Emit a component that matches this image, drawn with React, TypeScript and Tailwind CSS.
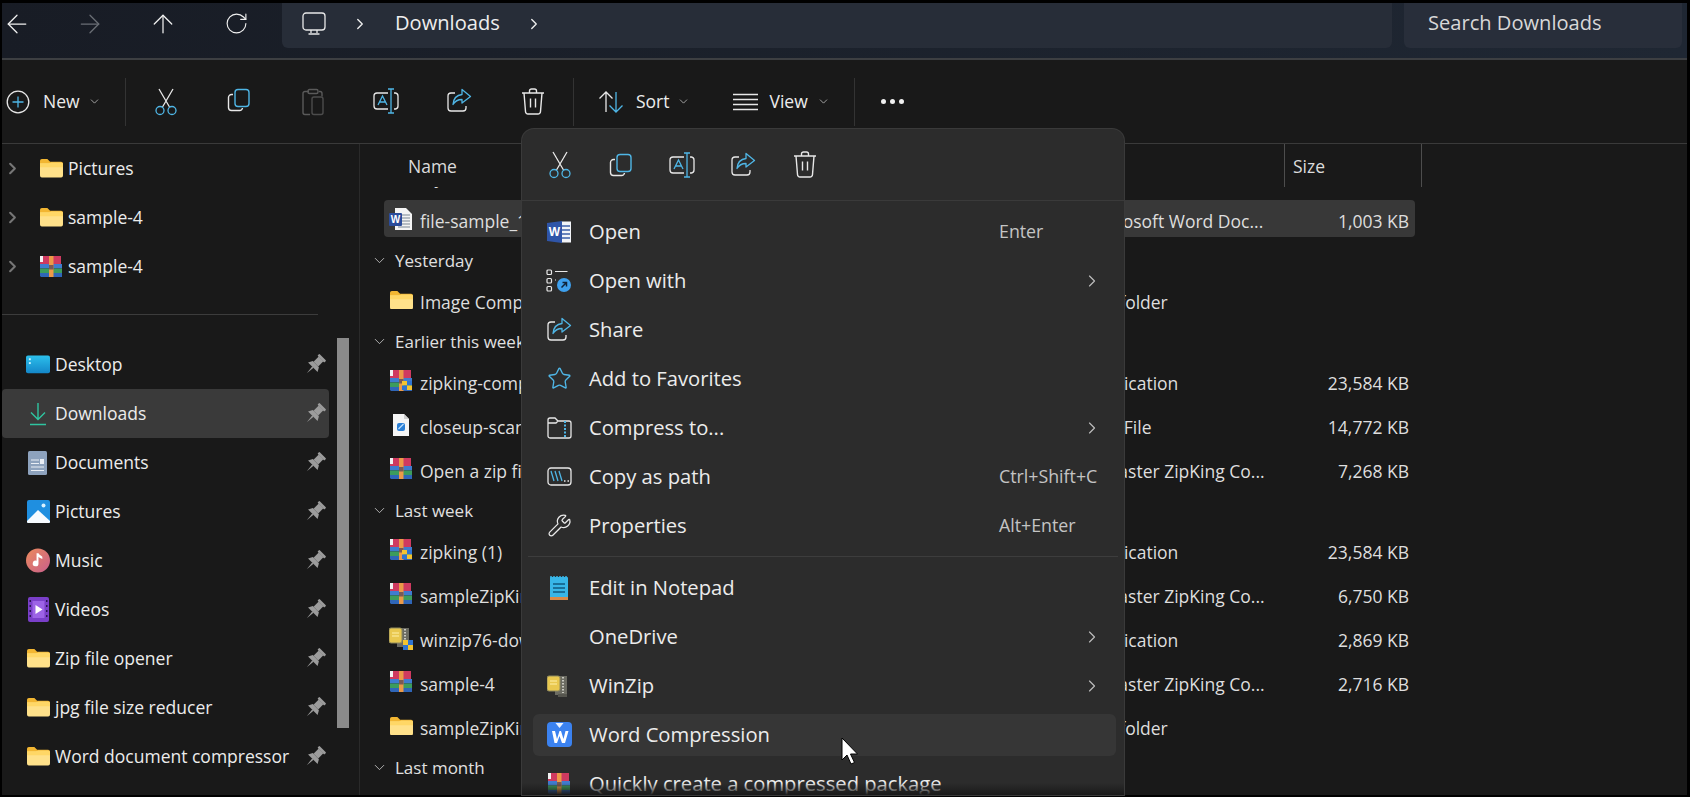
import { ArrowLeft, ArrowRight, ArrowUp, RotateCw, ChevronRight, ChevronDown, Star, Wrench } from 'lucide-react';
import type { ReactNode } from 'react';

const WHITE = '#e8e8e8';
const BLUE = '#4fb6e6';

function Folder({ size = 23 }: { size?: number }) {
  return (
    <svg width={size} height={size * 0.8} viewBox="0 0 25 20">
      <path d="M0 2a2 2 0 0 1 2-2h6l3 3h12a2 2 0 0 1 2 2v4H0z" fill="#f2b632" />
      <path d="M0 5h10l2-1h11a2 2 0 0 1 2 2v12a2 2 0 0 1-2 2H2a2 2 0 0 1-2-2z" fill="#ffe18a" />
      <path d="M0 5h10l2-1h11a2 2 0 0 1 2 2v3H0z" fill="#ffd766" />
    </svg>
  );
}

function Rar({ shield = false }: { shield?: boolean }) {
  return (
    <svg width="24" height="24" viewBox="0 0 24 24">
      <path d="M2 1h20v8H1V2z" fill="#cf3a60" />
      <rect x="1" y="9" width="22" height="4.500" fill="#3f7ccf" />
      <rect x="1" y="13.500" width="22" height="4.500" fill="#3c9c5c" />
      <path d="M1 18h22v4H2l-1-1z" fill="#2f66b8" />
      <rect x="1" y="1" width="3" height="6" fill="#f2f2f2" />
      <rect x="10" y="1" width="4.500" height="21" fill="#ec9a48" />
      <rect x="10" y="10" width="4.500" height="4.500" fill="#7a5a55" />
      {shield && (
        <g>
          <rect x="13" y="12" width="5" height="4.500" fill="#f4c430" />
          <rect x="18" y="12" width="5" height="4.500" fill="#2f74d0" />
          <rect x="13" y="16.500" width="5" height="4.500" fill="#2f74d0" />
          <rect x="18" y="16.500" width="5" height="4.500" fill="#f4c430" />
        </g>
      )}
    </svg>
  );
}

function WinZipIcon({ shield = false }: { shield?: boolean }) {
  return (
    <svg width="24" height="24" viewBox="0 0 24 24">
      <rect x="8" y="2" width="12" height="19" fill="#6b6b62" />
      <path d="M16 3v16" stroke="#c9c9c0" strokeWidth="2" strokeDasharray="1.500 1.500" />
      <rect x="0" y="2" width="13" height="15" rx="2" fill="#e9c84f" stroke="#8f8a5e" />
      <path d="M3 7h7M3 10h7" stroke="#fff0a8" />
      {shield ? (
        <g>
          <rect x="14" y="14" width="5" height="5" fill="#f4c430" />
          <rect x="19" y="14" width="5" height="5" fill="#2f74d0" />
          <rect x="14" y="19" width="5" height="5" fill="#2f74d0" />
          <rect x="19" y="19" width="5" height="5" fill="#f4c430" />
        </g>
      ) : (
        <rect x="11" y="20" width="9" height="3" fill="#55554e" />
      )}
    </svg>
  );
}

function WordFile() {
  return (
    <svg width="24" height="24" viewBox="0 0 24 24">
      <path d="M6 1h11l6 6v16H6z" fill="#f4f4f4" />
      <path d="M13 8h8M13 11h8M13 14h8M13 17h8M9 20h12" stroke="#7b8794" strokeWidth="1" />
      <rect x="0" y="6" width="13" height="13" rx="1" fill="#2b4c9b" />
      <text x="6.500" y="16" textAnchor="middle" fontSize="10" fontWeight="700" fill="#fff" fontFamily="Liberation Sans, sans-serif">W</text>
    </svg>
  );
}

function WordMenu() {
  return (
    <svg width="24" height="24" viewBox="0 0 24 24">
      <rect x="14" y="1.500" width="10" height="21" fill="#f2f4f8" />
      <path d="M15 6h8M15 10h8M15 14h8M15 18h8" stroke="#3d5fa8" strokeWidth="1.300" />
      <path d="M0 3 15 1v22L0 21z" fill="#2f55a8" />
      <text x="7.500" y="16" textAnchor="middle" fontSize="12" fontWeight="700" fill="#fff" fontFamily="Liberation Sans, sans-serif">W</text>
    </svg>
  );
}

function ScanFile() {
  return (
    <svg width="24" height="24" viewBox="0 0 24 24">
      <path d="M4 1h11l5 5v17H4z" fill="#f5f5f5" />
      <path d="M15 1v5h5" fill="#cfcfcf" />
      <rect x="8" y="10" width="8" height="8" rx="2" fill="#2a7fd6" />
      <path d="M9.500 16l5-5" stroke="#bfe0ff" strokeWidth="1.200" />
    </svg>
  );
}

function Desktop() {
  return (
    <svg width="25" height="20" viewBox="0 0 25 20">
      <defs>
        <linearGradient id="dsk" x1="0" y1="0" x2="0" y2="1">
          <stop offset="0" stopColor="#2cc0ec" />
          <stop offset="1" stopColor="#1487c9" />
        </linearGradient>
      </defs>
      <rect width="25" height="18.500" rx="2" fill="url(#dsk)" />
      <rect x="3" y="3" width="2" height="2" fill="#c9f2ff" />
      <rect x="3" y="7" width="2" height="2" fill="#c9f2ff" />
    </svg>
  );
}

function DownloadArrow() {
  return (
    <svg width="18" height="24" viewBox="0 0 18 24" fill="none" stroke="#2fc4a0" strokeWidth="1.400">
      <path d="M9 1v16M2 10.500 9 17.500l7-7M1 22.500h16" />
    </svg>
  );
}

function Documents() {
  return (
    <svg width="20" height="24" viewBox="0 0 20 24">
      <rect width="19" height="24" rx="1.500" fill="#8da2bd" />
      <path d="M3 9h8M3 12.500h8M3 16h13M3 19.500h13" stroke="#e9eef5" strokeWidth="1.200" />
      <rect x="12" y="8" width="4" height="5" fill="#e9eef5" />
    </svg>
  );
}

function PicturesIcon() {
  return (
    <svg width="23" height="23" viewBox="0 0 23 23">
      <rect width="23" height="23" rx="2" fill="#1f8fe0" />
      <circle cx="16.500" cy="5.500" r="2" fill="#d8f1ff" />
      <path d="M0 21 11 10l12 11v1a1 1 0 0 1-1 1H1a1 1 0 0 1-1-1z" fill="#f7fbff" />
    </svg>
  );
}

function Music() {
  return (
    <svg width="25" height="25" viewBox="0 0 25 25">
      <defs>
        <linearGradient id="mus" x1="0" y1="0" x2="1" y2="1">
          <stop offset="0" stopColor="#ec8a5c" />
          <stop offset="1" stopColor="#c85f8c" />
        </linearGradient>
      </defs>
      <circle cx="12.500" cy="12.500" r="12.500" fill="url(#mus)" />
      <path d="M13 5v10.500a3 3 0 1 1-2-2.800V5zM13 5c1 2 3 2.500 4 3.500V11c-1.500-1-3-1.500-4-2.500z" fill="#fff" />
    </svg>
  );
}

function Videos() {
  return (
    <svg width="21" height="25" viewBox="0 0 21 25">
      <rect width="21" height="25" rx="2" fill="#7a3fc9" />
      <rect x="4.500" y="4" width="12" height="17" fill="#9c63e6" />
      <path d="M1.500 3h1.500v2H1.500zM1.500 8h1.500v2H1.500zM1.500 13h1.500v2H1.500zM1.500 18h1.500v2H1.500zM18 3h1.500v2H18zM18 8h1.500v2H18zM18 13h1.500v2H18zM18 18h1.500v2H18z" fill="#2a1550" />
      <path d="M7.500 8l7 4.500-7 4.500z" fill="#fff" />
    </svg>
  );
}

function Pin() {
  return (
    <svg width="22" height="22" viewBox="0 0 18 18" fill="#9c9c9c" className="shrink-0">
      <g transform="rotate(45 9 9)">
        <rect x="5" y="0" width="8" height="2.200" rx="0.800" />
        <rect x="6.300" y="2" width="5.400" height="6" />
        <path d="M5.500 8h7l2 3.500h-11z" />
        <path d="M8.200 11.500h1.600L9 18.500z" />
      </g>
    </svg>
  );
}

function CutIcon() {
  return (
    <svg width="24" height="28" viewBox="0 0 24 28" fill="none" strokeWidth="1.300">
      <path d="M5 1l10.500 18M19 1 8.500 19" stroke={WHITE} />
      <circle cx="6" cy="22.500" r="4" stroke={BLUE} />
      <circle cx="18" cy="22.500" r="4" stroke={BLUE} />
    </svg>
  );
}

function CopyIcon() {
  return (
    <svg width="24" height="24" viewBox="0 0 24 24" fill="none" strokeWidth="1.400">
      <path d="M6 6.500H4.500A3 3 0 0 0 1.500 9.500v10a3 3 0 0 0 3 3h8a3 3 0 0 0 3-2.500" stroke={WHITE} />
      <rect x="8" y="1.500" width="14" height="17" rx="3" stroke={BLUE} />
    </svg>
  );
}

function PasteIcon() {
  return (
    <svg width="24" height="28" viewBox="0 0 24 28" fill="none" stroke="#5a5a5a" strokeWidth="1.400">
      <path d="M8 3.500H4a2 2 0 0 0-2 2v19a2 2 0 0 0 2 2h5M18 3.500h1a2 2 0 0 1 2 2v3" />
      <rect x="7" y="1.500" width="10" height="4" rx="1.500" />
      <rect x="11" y="9" width="11" height="17.500" rx="2" stroke="#4c4c4c" />
    </svg>
  );
}

function RenameIcon() {
  return (
    <svg width="26" height="26" viewBox="0 0 26 26" fill="none" strokeWidth="1.300">
      <path d="M15 5H4a3 3 0 0 0-3 3v10a3 3 0 0 0 3 3h11M21 5h1.500a3 3 0 0 1 2.500 3v10a3 3 0 0 1-2.500 3H21" stroke={WHITE} />
      <path d="M18 1v24M15 1h6M15 25h6" stroke={BLUE} />
      <path d="M5 17 9.500 8l4.500 9M6.500 14h6" stroke={BLUE} />
    </svg>
  );
}

function ShareIcon() {
  return (
    <svg width="25" height="25" viewBox="0 0 25 25" fill="none" strokeWidth="1.300">
      <path d="M8 5H4a3 3 0 0 0-3 3v12a3 3 0 0 0 3 3h12a3 3 0 0 0 3-3v-2" stroke={WHITE} />
      <path d="M15 1.500 23.500 8.500 15 15v-3.500c-4 0-7 1.500-9 5 .5-6 4-9.500 9-10z" stroke={BLUE} strokeLinejoin="round" />
    </svg>
  );
}

function TrashIcon() {
  return (
    <svg width="24" height="27" viewBox="0 0 24 27" fill="none" stroke={WHITE} strokeWidth="1.400">
      <path d="M1 5h22M8.500 5V3a2 2 0 0 1 2-2h3a2 2 0 0 1 2 2v2M3 5l1.500 18.500a2.500 2.500 0 0 0 2.500 2.500h10a2.500 2.500 0 0 0 2.500-2.500L21 5M9.500 10.500v9M14.500 10.500v9" />
    </svg>
  );
}

function OpenWith() {
  return (
    <svg width="26" height="24" viewBox="0 0 26 24" fill="none" stroke={WHITE} strokeWidth="1.200">
      <rect x="1" y="1" width="4.500" height="4.500" rx="1" />
      <rect x="1" y="9.500" width="4.500" height="4.500" rx="1" />
      <rect x="1" y="17.500" width="4.500" height="4.500" rx="1" />
      <path d="M9 2.500h12.500M9 11h1" />
      <circle cx="18" cy="16" r="7" fill="#3ea0ee" stroke="none" />
      <path d="M15.500 18.500l5-5M16.500 13.500h4v4" stroke="#10233a" strokeWidth="1.500" />
    </svg>
  );
}

function CompressIcon() {
  return (
    <svg width="25" height="22" viewBox="0 0 25 22" fill="none" strokeWidth="1.300">
      <path d="M1 5V3a2 2 0 0 1 2-2h5l3 3h11a2 2 0 0 1 2 2v13a2 2 0 0 1-2 2H3a2 2 0 0 1-2-2z M1 6h8l2-2" stroke={WHITE} />
      <path d="M18 4v17" stroke={BLUE} strokeWidth="2" strokeDasharray="2 1.500" />
    </svg>
  );
}

function CopyPath() {
  return (
    <svg width="25" height="19" viewBox="0 0 25 19" fill="none" strokeWidth="1.300">
      <rect x="1" y="1" width="23" height="17" rx="3" stroke={WHITE} />
      <path d="M4 4l3 10M8 4l3 10M12 4l3 10" stroke={BLUE} />
      <path d="M17 14h1.500M20.500 14H22" stroke={WHITE} />
    </svg>
  );
}

function Notepad() {
  return (
    <svg width="20" height="26" viewBox="0 0 20 26">
      <rect x="1" y="2" width="18" height="21" rx="1" fill="#38b6e8" />
      <rect x="1" y="22" width="18" height="3" fill="#d98a4a" />
      <path d="M2 1v3M5 1v3M8 1v3M11 1v3M14 1v3M17 1v3" stroke="#38b6e8" strokeWidth="1.500" />
      <path d="M4 9h12M4 13h12M4 17h12" stroke="#0f5a80" strokeWidth="1.500" />
    </svg>
  );
}

function WordCompression() {
  return (
    <svg width="25" height="25" viewBox="0 0 25 25">
      <rect width="25" height="25" rx="4" fill="#3b82f0" />
      <path d="M8.500 1h8L12.500 6z" fill="#e8f1ff" />
      <path d="M5 9h3l2 8 2.500-8h1.500l2.500 8 2-8h3l-3.500 12h-3L12.500 14 10 21H7.500z" fill="#fff" />
    </svg>
  );
}

const sideTree = [
  { label: 'Pictures', icon: <Folder /> },
  { label: 'sample-4', icon: <Folder /> },
  { label: 'sample-4', icon: <Rar /> },
];

const pinned: { label: string; icon: ReactNode; active?: boolean }[] = [
  { label: 'Desktop', icon: <Desktop /> },
  { label: 'Downloads', icon: <DownloadArrow />, active: true },
  { label: 'Documents', icon: <Documents /> },
  { label: 'Pictures', icon: <PicturesIcon /> },
  { label: 'Music', icon: <Music /> },
  { label: 'Videos', icon: <Videos /> },
  { label: 'Zip file opener', icon: <Folder /> },
  { label: 'jpg file size reducer', icon: <Folder /> },
  { label: 'Word document compressor', icon: <Folder /> },
];

type Row =
  | { group: string }
  | { name: string; type: string; size: string; icon: ReactNode; selected?: boolean };

const rows: Row[] = [
  { group: 'Today' },
  { name: 'file-sample_1000kB', type: 'Microsoft Word Doc...', size: '1,003 KB', icon: <WordFile />, selected: true },
  { group: 'Yesterday' },
  { name: 'Image Compressor', type: 'File folder', size: '', icon: <Folder /> },
  { group: 'Earlier this week' },
  { name: 'zipking-compressor', type: 'Application', size: '23,584 KB', icon: <Rar shield /> },
  { name: 'closeup-scan', type: 'PDF File', size: '14,772 KB', icon: <ScanFile /> },
  { name: 'Open a zip file', type: 'A Master ZipKing Co...', size: '7,268 KB', icon: <Rar /> },
  { group: 'Last week' },
  { name: 'zipking (1)', type: 'Application', size: '23,584 KB', icon: <Rar shield /> },
  { name: 'sampleZipKing', type: 'A Master ZipKing Co...', size: '6,750 KB', icon: <Rar /> },
  { name: 'winzip76-downwz', type: 'Application', size: '2,869 KB', icon: <WinZipIcon shield /> },
  { name: 'sample-4', type: 'A Master ZipKing Co...', size: '2,716 KB', icon: <Rar /> },
  { name: 'sampleZipKing', type: 'File folder', size: '', icon: <Folder /> },
  { group: 'Last month' },
];

const menuTop = [<CutIcon />, <CopyIcon />, <RenameIcon />, <ShareIcon />, <TrashIcon />];

const menuA: { label: string; icon?: ReactNode; hint?: string; more?: boolean }[] = [
  { label: 'Open', icon: <WordMenu />, hint: 'Enter' },
  { label: 'Open with', icon: <OpenWith />, more: true },
  { label: 'Share', icon: <ShareIcon /> },
  { label: 'Add to Favorites', icon: <Star size={25} strokeWidth={1.3} color={BLUE} /> },
  { label: 'Compress to...', icon: <CompressIcon />, more: true },
  { label: 'Copy as path', icon: <CopyPath />, hint: 'Ctrl+Shift+C' },
  { label: 'Properties', icon: <Wrench size={25} strokeWidth={1.2} color={WHITE} />, hint: 'Alt+Enter' },
];

const menuB: { label: string; icon?: ReactNode; more?: boolean; active?: boolean }[] = [
  { label: 'Edit in Notepad', icon: <Notepad /> },
  { label: 'OneDrive', more: true },
  { label: 'WinZip', icon: <WinZipIcon />, more: true },
  { label: 'Word Compression', icon: <WordCompression />, active: true },
  { label: 'Quickly create a compressed package', icon: <Rar /> },
];

function MenuRow({ label, icon, hint, more, active }: { label: string; icon?: ReactNode; hint?: string; more?: boolean; active?: boolean }) {
  return (
    <div className="h-[49px] pl-[11px] pr-[8px] flex items-center">
      <div className={`w-full h-[42px] pl-[11px] flex items-center rounded-md ${active ? 'bg-[#363636]' : ''}`}>
        <div className="w-[30px] h-[30px] flex items-center justify-center shrink-0">{icon}</div>
        <div className="ml-[15px] flex-1 whitespace-nowrap text-[20.2px] text-[#ececec]">{label}</div>
        {(hint || more) && (
          <div className="w-[117px] shrink-0 text-[17.8px] text-[#c4c4c4] whitespace-nowrap">
            {hint}
            {more && <ChevronRight size={20} strokeWidth={1.4} className="ml-[83px] text-[#bdbdbd]" />}
          </div>
        )}
      </div>
    </div>
  );
}

export default function App() {
  return (
    <div className="relative w-[1690px] h-[797px] overflow-hidden bg-black pt-[3px] pb-[2px] pl-[2px] pr-[3px] flex flex-col font-['Open_Sans',sans-serif] text-[#e4e4e4]">
      {/* Title bar */}
      <div className="h-[55px] shrink-0 flex items-start bg-gradient-to-r from-[#181c25] to-[#1f2733]">
        <div className="h-[45px] pb-[4px] flex items-center gap-[43px]">
          <div className="w-[30px] flex justify-center"><ArrowLeft size={30} strokeWidth={1} color="#f0f0f0" /></div>
          <div className="w-[30px] flex justify-center"><ArrowRight size={30} strokeWidth={1} color="#6a6e75" /></div>
          <div className="w-[30px] flex justify-center"><ArrowUp size={30} strokeWidth={1} color="#f0f0f0" /></div>
          <div className="w-[30px] flex justify-center"><RotateCw size={25} strokeWidth={1.1} color="#f0f0f0" /></div>
        </div>
        <div className="ml-[31px] w-[1110px] h-[45px] pb-[4px] rounded-b-md bg-[#272d38] flex items-center text-[20.1px] text-[#eeeeee]">
          <svg width="24" height="24" viewBox="0 0 24 24" fill="none" stroke="#e8e8e8" strokeWidth="1.300" className="ml-[20px]">
            <rect x="1" y="1" width="22" height="17" rx="3" />
            <path d="M9 18v3M15 18v3M6.500 22h11" />
          </svg>
          <ChevronRight size={18} strokeWidth={1.8} className="ml-[25px]" />
          <span className="ml-[26px]">Downloads</span>
          <ChevronRight size={18} strokeWidth={1.8} className="ml-[25px]" />
        </div>
        <div className="ml-[12px] w-[278px] h-[45px] pb-[4px] rounded-b-md bg-[#282e3a] flex items-center pl-[24px] text-[20.1px] text-[#d8d8d8]">
          Search Downloads
        </div>
      </div>
      <div className="h-[2px] shrink-0 bg-[#3d3f42]" />

      {/* Command bar */}
      <div className="h-[83px] shrink-0 flex items-center bg-[#191919] text-[17.5px] text-[#ececec]">
        <div className="w-[123px] flex items-center shrink-0">
          <svg width="24" height="24" viewBox="0 0 24 24" fill="none" strokeWidth="1.300" className="ml-[4px]">
            <circle cx="12" cy="12" r="10.800" stroke={WHITE} />
            <path d="M12 6.500v11M6.500 12h11" stroke={BLUE} />
          </svg>
          <span className="ml-[13px]">New</span>
          <ChevronDown size={13} strokeWidth={1.5} className="ml-[8px] text-[#bdbdbd]" />
        </div>
        <div className="w-px h-[48px] bg-[#333333] shrink-0" />
        <div className="ml-[3px] flex shrink-0">
          {[<CutIcon />, <CopyIcon />, <PasteIcon />, <RenameIcon />, <ShareIcon />, <TrashIcon />].map((icon, i) => (
            <div key={i} className="w-[73.500px] flex justify-center">{icon}</div>
          ))}
        </div>
        <div className="ml-[3px] w-px h-[48px] bg-[#333333] shrink-0" />
        <svg width="26" height="24" viewBox="0 0 26 24" fill="none" strokeWidth="1.300" className="ml-[24px] shrink-0">
          <path d="M8 22V2M1.500 8.500 8 2l6.500 6.500" stroke={WHITE} />
          <path d="M18 2v20M11.500 15.500 18 22l6.500-6.500" stroke={BLUE} />
        </svg>
        <span className="ml-[12px]">Sort</span>
        <ChevronDown size={13} strokeWidth={1.5} className="ml-[7px] text-[#bdbdbd]" />
        <svg width="25" height="18" viewBox="0 0 25 18" fill="none" stroke={WHITE} strokeWidth="1.300" className="ml-[43px] shrink-0">
          <path d="M0 1.500h25M0 6.500h25M0 11.500h25M0 16.500h25" />
        </svg>
        <span className="ml-[12px]">View</span>
        <ChevronDown size={13} strokeWidth={1.5} className="ml-[9px] text-[#bdbdbd]" />
        <div className="ml-[24px] w-px h-[48px] bg-[#333333] shrink-0" />
        <div className="ml-[26px] flex gap-[4px]">
          <span className="w-[5px] h-[5px] rounded-full bg-[#f0f0f0]" />
          <span className="w-[5px] h-[5px] rounded-full bg-[#f0f0f0]" />
          <span className="w-[5px] h-[5px] rounded-full bg-[#f0f0f0]" />
        </div>
      </div>
      <div className="h-px shrink-0 bg-[#3a3a3a]" />

      {/* Body */}
      <div className="flex-1 min-h-0 flex bg-[#191919]">
        <aside className="w-[358px] shrink-0 border-r border-[#2a2a2a] text-[17.5px] text-[#ececec]">
          {sideTree.map((item, i) => (
            <div key={i} className="h-[49px] flex items-center">
              <div className="w-[20px] flex justify-center">
                <ChevronRight size={19} strokeWidth={2.6} className="text-[#767676]" />
              </div>
              <div className="ml-[17px] w-[24px] flex justify-center">{item.icon}</div>
              <span className="ml-[5px]">{item.label}</span>
            </div>
          ))}
          <div className="mt-[23px] w-[316px] h-px bg-[#3c3c3c]" />
          <div className="mt-[25px] flex items-start">
            <div className="w-[327px] shrink-0">
              {pinned.map((item) => (
                <div key={item.label} className={`h-[49px] flex items-center pl-[24px] pr-[3px] rounded ${item.active ? 'bg-[#3a3a3a]' : ''}`}>
                  <div className="w-[24px] flex justify-center shrink-0">{item.icon}</div>
                  <span className="ml-[5px] flex-1 whitespace-nowrap">{item.label}</span>
                  <Pin />
                </div>
              ))}
            </div>
            <div className="-mt-[2px] ml-[8px] w-[12px] h-[390px] bg-[#8a8a8a]" />
          </div>
        </aside>

        <main className="flex-1 min-w-0 flex flex-col text-[17.5px]">
          <div className="h-[43px] shrink-0 flex items-center text-[#dcdcdc]">
            <div className="w-[924px] pl-[48px] pt-px">Name</div>
            <div className="w-[138px] h-full border-x border-[#4d4d4d] pl-[8px] flex items-center pt-px">Size</div>
          </div>
          <div className="flex-1 min-h-0 overflow-hidden">
            <div className="-mt-[25px]">
              {rows.map((row, i) =>
                'group' in row ? (
                  <div key={i} className="h-[37px] pb-[2px] first:pb-[5px] flex items-center text-[17px] text-[#e0e0e0]">
                    <ChevronDown size={17} strokeWidth={1.2} className="ml-[11px] text-[#c8c8c8]" />
                    <span className="ml-[7px] whitespace-nowrap">{row.group}</span>
                  </div>
                ) : (
                  <div key={i} className="h-[44px] pt-px">
                    <div className={`ml-[24px] w-[1031px] h-[37px] pt-[5px] flex items-center text-[#dedede] rounded-sm ${row.selected ? 'bg-[#383838]' : ''}`}>
                      <div className="ml-[5px] -mt-[4px] w-[24px] flex justify-center shrink-0">{row.icon}</div>
                      <span className="ml-[7px] w-[667px] shrink-0 whitespace-nowrap">{row.name}</span>
                      <span className="w-[186px] shrink-0 whitespace-nowrap">{row.type}</span>
                      <span className="w-[136px] shrink-0 text-right whitespace-nowrap">{row.size}</span>
                    </div>
                  </div>
                )
              )}
            </div>
          </div>
        </main>
      </div>

      {/* Context menu */}
      <div className="absolute left-[522px] top-[129px] w-[602px] h-[666px] overflow-hidden rounded-t-[12px] bg-[#2c2c2c] ring-1 ring-[#3a3a3a]">
        <div className="h-[72px] pl-[7px] flex items-center border-b border-[#3a3a3a]">
          {menuTop.map((icon, i) => (
            <div key={i} className="w-[61.300px] flex justify-center">{icon}</div>
          ))}
        </div>
        <div className="pt-[6px]">
          {menuA.map((item) => (
            <MenuRow key={item.label} {...item} />
          ))}
        </div>
        <div className="mx-[6px] my-[6px] h-px bg-[#3d3d3d]" />
        <div>
          {menuB.map((item) => (
            <MenuRow key={item.label} {...item} />
          ))}
        </div>
        <div className="absolute left-0 right-0 bottom-0 h-[12px] bg-gradient-to-b from-transparent to-[#1a1a1a]" />
      </div>

      {/* Mouse pointer */}
      <svg width="18" height="28" viewBox="0 0 18 28" className="absolute left-[841px] top-[737px]">
        <path d="M1 1v22l5-5 4 9 3.500-1.500-4-8.500h7z" fill="#fff" stroke="#000" strokeWidth="1" />
      </svg>
    </div>
  );
}
